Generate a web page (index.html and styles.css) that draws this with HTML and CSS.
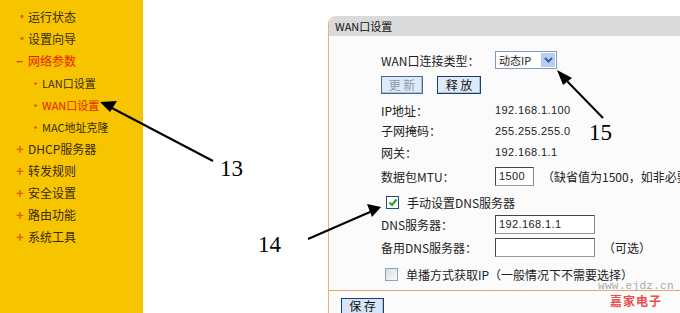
FILE: index.html
```html
<!DOCTYPE html>
<html lang="zh-CN">
<head>
  <meta charset="UTF-8">
  <title>WAN口设置</title>
  <link rel="stylesheet" href="styles.css">
</head>
<body>
  <div class="menu">
    <div class="item"><span class="dot">•</span>运行状态</div>
    <div class="item"><span class="dot">•</span>设置向导</div>
    <div class="item open"><span class="minus">−</span>网络参数</div>
    <div class="item sub"><span class="dot">•</span>LAN口设置</div>
    <div class="item sub active"><span class="dot">•</span>WAN口设置</div>
    <div class="item sub"><span class="dot">•</span>MAC地址克隆</div>
    <div class="item"><span class="plus">+</span>DHCP服务器</div>
    <div class="item"><span class="plus">+</span>转发规则</div>
    <div class="item"><span class="plus">+</span>安全设置</div>
    <div class="item"><span class="plus">+</span>路由功能</div>
    <div class="item"><span class="plus">+</span>系统工具</div>
  </div>

  <div class="main">
    <div class="panel">
      <div class="panel-head">WAN口设置</div>
      <div class="panel-body">
        <div class="row r1">
          <span class="label">WAN口连接类型：</span>
          <span class="select">动态IP<span class="select-btn"><svg width="9" height="6" viewBox="0 0 9 6"><path d="M1 1 L4.5 4.5 L8 1" fill="none" stroke="#3a5da8" stroke-width="2"/></svg></span></span>
        </div>
        <div class="row r2">
          <button class="btn disabled">更 新</button>
          <button class="btn">释 放</button>
        </div>
        <div class="row r3"><span class="label">IP地址：</span><span class="val">192.168.1.100</span></div>
        <div class="row r4"><span class="label">子网掩码：</span><span class="val">255.255.255.0</span></div>
        <div class="row r5"><span class="label">网关：</span><span class="val">192.168.1.1</span></div>
        <div class="row r6">
          <span class="label">数据包MTU：</span>
          <span class="input small">1500</span>
          <span class="hint">（缺省值为1500，如非必要，请勿修改）</span>
        </div>
        <div class="row r7"><span class="check on"><svg width="10" height="9" viewBox="0 0 10 9"><path d="M1.5 4.5 L4 7 L8.5 1.5" fill="none" stroke="#21a121" stroke-width="2"/></svg></span><span class="check-label">手动设置DNS服务器</span></div>
        <div class="row r8"><span class="label">DNS服务器：</span><span class="input wide">192.168.1.1</span></div>
        <div class="row r9"><span class="label">备用DNS服务器：</span><span class="input wide"></span><span class="hint">（可选）</span></div>
        <div class="row r10"><span class="check"></span><span class="check-label">单播方式获取IP（一般情况下不需要选择）</span></div>
      </div>
      <div class="panel-foot">
        <button class="btn save">保 存</button>
      </div>
    </div>
  </div>

  <!-- callout arrows and numbers drawn over the screenshot -->
  <svg class="arrows" width="680" height="313" viewBox="0 0 680 313">
    <line x1="213" y1="161" x2="110" y2="107" stroke="#000" stroke-width="2"/>
    <path d="M100 102 L117 101 L110 112 Z" fill="#000"/>
    <line x1="308" y1="239" x2="370" y2="212" stroke="#000" stroke-width="2"/>
    <path d="M381 207 L367 204 L372 217 Z" fill="#000"/>
    <line x1="603" y1="118" x2="565" y2="79" stroke="#000" stroke-width="2"/>
    <path d="M557 70 L572 78 L563 85 Z" fill="#000"/>
  </svg>
  <div class="num n13">13</div>
  <div class="num n14">14</div>
  <div class="num n15">15</div>
  <div class="mark site">www.ejdz.cn</div>
  <div class="mark brand">嘉家电子</div>
</body>
</html>
```

FILE: styles.css
```css
body {
  margin: 0;
  width: 680px;
  height: 313px;
  overflow: hidden;
  display: flex;
  background: #fff;
  font-family: "Noto Sans CJK SC", sans-serif;
  font-size: 12px;
  color: #222;
  position: relative;
}

.menu {
  width: 143px;
  flex-shrink: 0;
  background: #f6c500;
  padding-top: 6px;
}

.item {
  height: 22px;
  line-height: 22px;
  padding-left: 16px;
  color: #3a2a10;
  display: flex;
  align-items: center;
}

.item.sub {
  padding-left: 30px;
  font-size: 11px;
}

.item.open,
.item.active {
  color: #e81c00;
}

.dot,
.plus,
.minus {
  width: 12px;
  color: #e0600a;
  font-weight: bold;
}

.plus {
  font-size: 13px;
}

.minus {
  color: #e04010;
}

.main {
  flex: 1;
  padding: 16px 0 0 185px;
}

.panel {
  width: 352px;
  overflow: hidden;
  border-left: 1px solid #e3b57a;
  border-top-left-radius: 8px;
  background: #fbfbfb;
}

.panel-head {
  height: 20px;
  line-height: 20px;
  background: #dadada;
  border-top-left-radius: 8px;
  padding-left: 6px;
  font-size: 11px;
  color: #111;
}

.panel-body {
  padding: 14px 0 0 52px;
  height: 240px;
  border-bottom: 1px solid #e3a86a;
}

.row {
  height: 20px;
  display: flex;
  align-items: center;
}

.r2 { margin-top: 5px; height: 19px; gap: 14px; }
.r3 { margin-top: 6px; }
.r4 { height: 21px; }
.r5 { height: 22px; }
.r6 { margin-top: 3px; height: 21px; }
.r7 { margin-top: 5px; padding-left: 5px; }
.r8 { margin-top: 2px; }
.r9 { margin-top: 3px; }
.r10 { margin-top: 7px; padding-left: 4px; }

.label {
  width: 114px;
  flex-shrink: 0;
  color: #222;
}

.val {
  font-family: "Liberation Sans", sans-serif;
  font-size: 11px;
  letter-spacing: 0.4px;
  color: #222;
}

.select {
  width: 62px;
  height: 18px;
  border: 1px solid #7f9db9;
  background: #fff;
  display: flex;
  align-items: center;
  justify-content: space-between;
  padding-left: 3px;
  box-sizing: border-box;
  font-size: 11px;
}

.select-btn {
  width: 14px;
  height: 14px;
  margin-right: 1px;
  background: #b9cdf2;
  display: flex;
  align-items: center;
  justify-content: center;
}

.btn {
  height: 18px;
  width: 42px;
  padding: 0;
  font-family: "Noto Sans CJK SC", sans-serif;
  font-size: 12px;
  line-height: 14px;
  border: 1px solid #1b3f6c;
  background: #dfeaf7;
  color: #111;
  box-shadow: inset -1px -1px 0 #a9c0dc;
}

.btn.disabled {
  color: #8a9aa8;
  border-color: #45698f;
}

.btn + .btn {
  width: 44px;
}

.input {
  height: 19px;
  flex-shrink: 0;
  border: 1px solid #444;
  border-right-color: #888;
  border-bottom-color: #999;
  box-sizing: border-box;
  background: #fff;
  font-family: "Liberation Sans", sans-serif;
  font-size: 11px;
  line-height: 17px;
  padding-left: 3px;
  letter-spacing: 0.4px;
}

.input.small {
  width: 39px;
}

.input.wide {
  width: 100px;
}

.hint {
  margin-left: 8px;
  white-space: nowrap;
}

.check {
  width: 13px;
  height: 13px;
  box-sizing: border-box;
  border: 1px solid #8aa1bd;
  background: linear-gradient(135deg, #dcdcd8, #fafafa);
  display: flex;
  align-items: center;
  justify-content: center;
}

.check.on {
  background: #fff;
  border-color: #1c5180;
}

.check-label {
  margin-left: 8px;
  white-space: nowrap;
}

.panel-foot {
  padding: 6px 0 0 12px;
}

.btn.save {
  width: 43px;
  height: 17px;
  background: #d6e5f7;
}

.arrows {
  position: absolute;
  left: 0;
  top: 0;
  pointer-events: none;
}

.num {
  position: absolute;
  font-family: "Liberation Serif", serif;
  font-size: 23px;
  line-height: 23px;
  color: #000;
}

.n13 { left: 220px; top: 157px; }
.n14 { left: 258px; top: 233px; }
.n15 { left: 589px; top: 121px; }

.mark {
  position: absolute;
  white-space: nowrap;
}

.site {
  left: 598px;
  top: 281px;
  font-family: "Liberation Mono", monospace;
  font-size: 11px;
  line-height: 11px;
  color: #a8a8a8;
  letter-spacing: 0.3px;
}

.brand {
  left: 610px;
  top: 295px;
  font-size: 12px;
  line-height: 12px;
  font-weight: bold;
  color: #e85050;
  letter-spacing: 1px;
}
```
